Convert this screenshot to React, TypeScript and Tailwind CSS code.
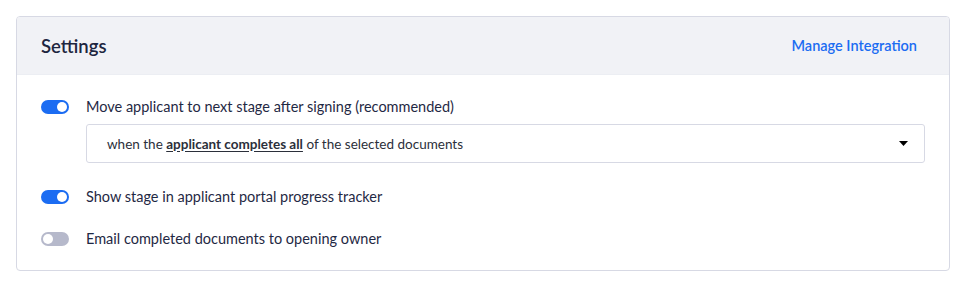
import { useState } from 'react';

function Toggle({ on, onClick }: { on: boolean; onClick: () => void }) {
  return (
    <button
      type="button"
      onClick={onClick}
      className={`relative h-[14px] w-[28px] shrink-0 rounded-full transition-colors ${on ? 'bg-[#1b6cf2]' : 'bg-[#b6b9cb]'}`}
    >
      <span
        className={`absolute top-[2px] h-[10px] w-[10px] rounded-full bg-white transition-all ${on ? 'left-[16px]' : 'left-[2px]'}`}
      />
    </button>
  );
}

export default function App() {
  const [moveNext, setMoveNext] = useState(true);
  const [showStage, setShowStage] = useState(true);
  const [emailDocs, setEmailDocs] = useState(false);

  return (
    <div className="bg-white p-4 text-[#1f2944]" style={{ fontFamily: 'Lato, "Open Sans", sans-serif' }}>
      <div className="overflow-hidden rounded-[4px] border border-[#d7d9e4]">
        <div className="flex h-[58px] items-center justify-between border-b border-[#eceef3] bg-[#f1f2f6] pl-6 pr-8">
          <h2 className="text-[18.5px] font-semibold leading-6 text-[#1d2640]">Settings</h2>
          <a href="#" className="text-[14.5px] font-semibold leading-5 text-[#1b6cf2]">
            Manage Integration
          </a>
        </div>

        <div className="flex flex-col px-6 pb-[21px] pt-[22px]">
          <div className="flex h-5 items-center gap-[17px]">
            <Toggle on={moveNext} onClick={() => setMoveNext(!moveNext)} />
            <span className="text-[14.5px] leading-5">Move applicant to next stage after signing (recommended)</span>
          </div>

          <div className="ml-[45px] mt-[7px] flex h-[39px] items-center justify-between rounded-[3px] border border-[#d7d9e4] pl-5 pr-4">
            <span className="text-[13.5px] leading-5 text-[#2b2f3a]">
              when the <span className="font-bold underline underline-offset-2">applicant completes all</span> of the selected documents
            </span>
            <svg width="9" height="5" viewBox="0 0 9 5" className="fill-black">
              <path d="M0 0h9L4.5 5z" />
            </svg>
          </div>

          <div className="mt-[24px] flex h-5 items-center gap-[17px]">
            <Toggle on={showStage} onClick={() => setShowStage(!showStage)} />
            <span className="text-[14.5px] leading-5">Show stage in applicant portal progress tracker</span>
          </div>

          <div className="mt-[22px] flex h-5 items-center gap-[17px]">
            <Toggle on={emailDocs} onClick={() => setEmailDocs(!emailDocs)} />
            <span className="text-[14.5px] leading-5">Email completed documents to opening owner</span>
          </div>
        </div>
      </div>
    </div>
  );
}
